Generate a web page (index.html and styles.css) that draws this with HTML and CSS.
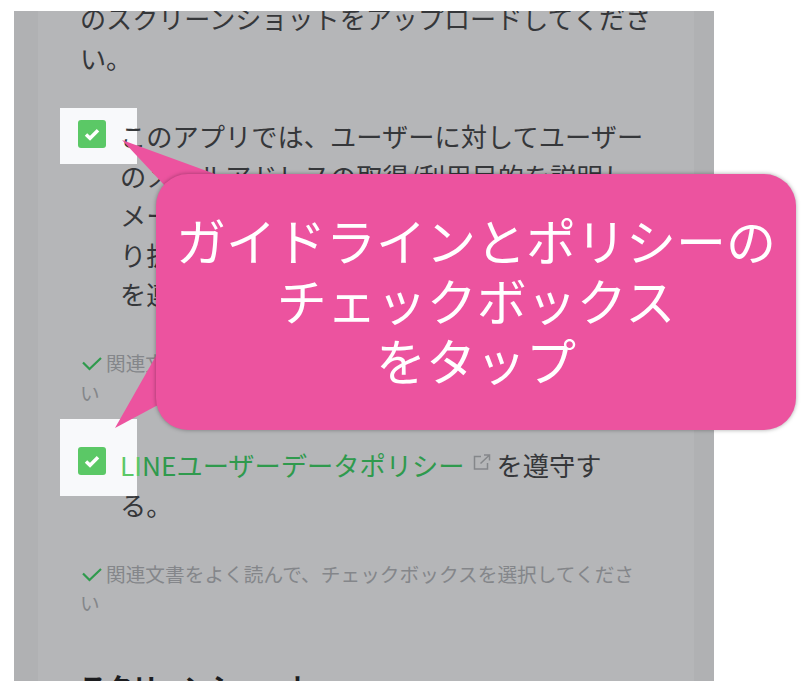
FILE: index.html
```html
<!DOCTYPE html>
<html lang="ja">
<head>
<meta charset="utf-8">
<title>チェックボックスをタップ</title>
<link rel="stylesheet" href="styles.css">
</head>
<body>
<main class="frame">
  <div class="panel">
    <p class="lead">のスクリーンショットをアップロードしてくださ<br>い。</p>
    <div class="item first">
      <span class="spot"></span>
      <span class="box"><svg viewBox="0 0 28 28" width="28" height="28"><path class="tick" d="M8 14.500l4 3.700 8-8"/></svg></span>
      <p class="text">このアプリでは、ユーザーに対してユーザー<br>のメールアドレスの取得/利用目的を説明し<br>メールアドレスの取得前に同意を得て、取<br>り扱いについては関連するガイドライン<br>を遵守する。</p>
    </div>
    <p class="note"><svg class="ok" viewBox="0 0 20 14" width="20" height="14"><path d="M1 5.500l6.500 6.500L19 1"/></svg>関連文書をよく読んで、チェックボックスを選択してくださ<br>い</p>
    <div class="item second">
      <span class="spot"></span>
      <span class="box"><svg viewBox="0 0 28 28" width="28" height="28"><path class="tick" d="M8 14.500l4 3.700 8-8"/></svg></span>
      <p class="text"><a class="link"><span class="lit">LI</span>NEユーザーデータポリシー</a><svg class="ext" viewBox="0 0 18 16" width="18" height="16"><path d="M8 2.500H1.500v12.500h13V9"/><path d="M7.500 9.500L16.500 1M11 1h5.500v5.500"/></svg> を遵守す<br>る。</p>
    </div>
    <p class="note later"><svg class="ok" viewBox="0 0 20 14" width="20" height="14"><path d="M1 5.500l6.500 6.500L19 1"/></svg>関連文書をよく読んで、チェックボックスを選択してくださ<br>い</p>
    <h2 class="heading">スクリーンショット</h2>
  </div>
</main>
<aside class="callout">
  <svg class="tails" viewBox="0 0 810 692" width="810" height="692"><path d="M122 140L215 174 167 188Z"/><path d="M115 428L165 340 158 405Z"/></svg>
  <div class="bubble">ガイドラインとポリシーの<br>チェックボックス<br>をタップ</div>
</aside>
</body>
</html>
```
FILE: styles.css
```css
* { box-sizing: border-box; }
html, body { margin: 0; padding: 0; background: #fff; }
body {
  width: 810px;
  height: 692px;
  overflow: hidden;
  font-family: "Noto Sans CJK JP", "Noto Sans", sans-serif;
  color: #35373a;
}
.frame {
  width: 700px;
  height: 670px;
  margin: 11px 0 0 14px;
  padding: 0 20px 0 24px;
  background: #b0b1b3;
}
.panel {
  height: 670px;
  overflow: hidden;
  padding: 0 20px 0 42px;
  background: #b5b6b8;
}
p, h2 { margin: 0; }
.lead {
  margin-top: -13px;
  font-size: 26.100px;
  line-height: 40px;
}
.item {
  position: relative;
  display: flex;
  gap: 16px;
}
.first { margin-top: 39px; }
.second { margin-top: 37px; }
.spot {
  position: absolute;
  left: -20px;
  top: -9px;
  width: 77px;
  height: 56px;
  background: #f8f9fb;
}
.second .spot { top: -26px; height: 77px; }
.box {
  position: relative;
  flex: none;
  width: 28px;
  height: 28px;
  margin-top: 3px;
  margin-left: -2px;
  border-radius: 3px;
  background: #5bc866;
}
.second .box { margin-top: 2px; }
.box svg { display: block; }
.tick { fill: none; stroke: #fff; stroke-width: 3.500; }
.text {
  position: relative;
  margin-left: -2px;
  font-size: 26.250px;
  line-height: 39.500px;
  width: 560px;
}
.second .text { line-height: 40.500px; }
.link { color: #2f9a4d; }
.lit { color: #5bc866; }
.ext { margin: 0 0 12px 8px; vertical-align: middle; fill: none; stroke: #85878a; stroke-width: 1.500; }
.note {
  margin-top: 33px;
  font-size: 19.700px;
  line-height: 30px;
  color: #84868a;
}
.note.later { margin-top: 33px; line-height: 29.500px; }
.ok {
  margin: 0 4px 0 2px;
  fill: none;
  stroke: #2f9a4d;
  stroke-width: 2.200;
}
.heading {
  margin-top: 48px;
  font-size: 26.100px;
  line-height: 40px;
  font-weight: 700;
  color: #1c1d1f;
}
.tails { position: absolute; left: 0; top: 0; fill: #ec539f; }
.bubble {
  position: absolute;
  left: 156px;
  top: 174px;
  width: 640px;
  height: 256px;
  padding-top: 35px;
  border-radius: 32px;
  background: #ec539f;
  box-shadow: 0 0 4px rgba(0, 0, 0, .35);
  color: #fff;
  font-size: 50px;
  font-weight: 400;
  line-height: 60px;
  text-align: center;
}
```
